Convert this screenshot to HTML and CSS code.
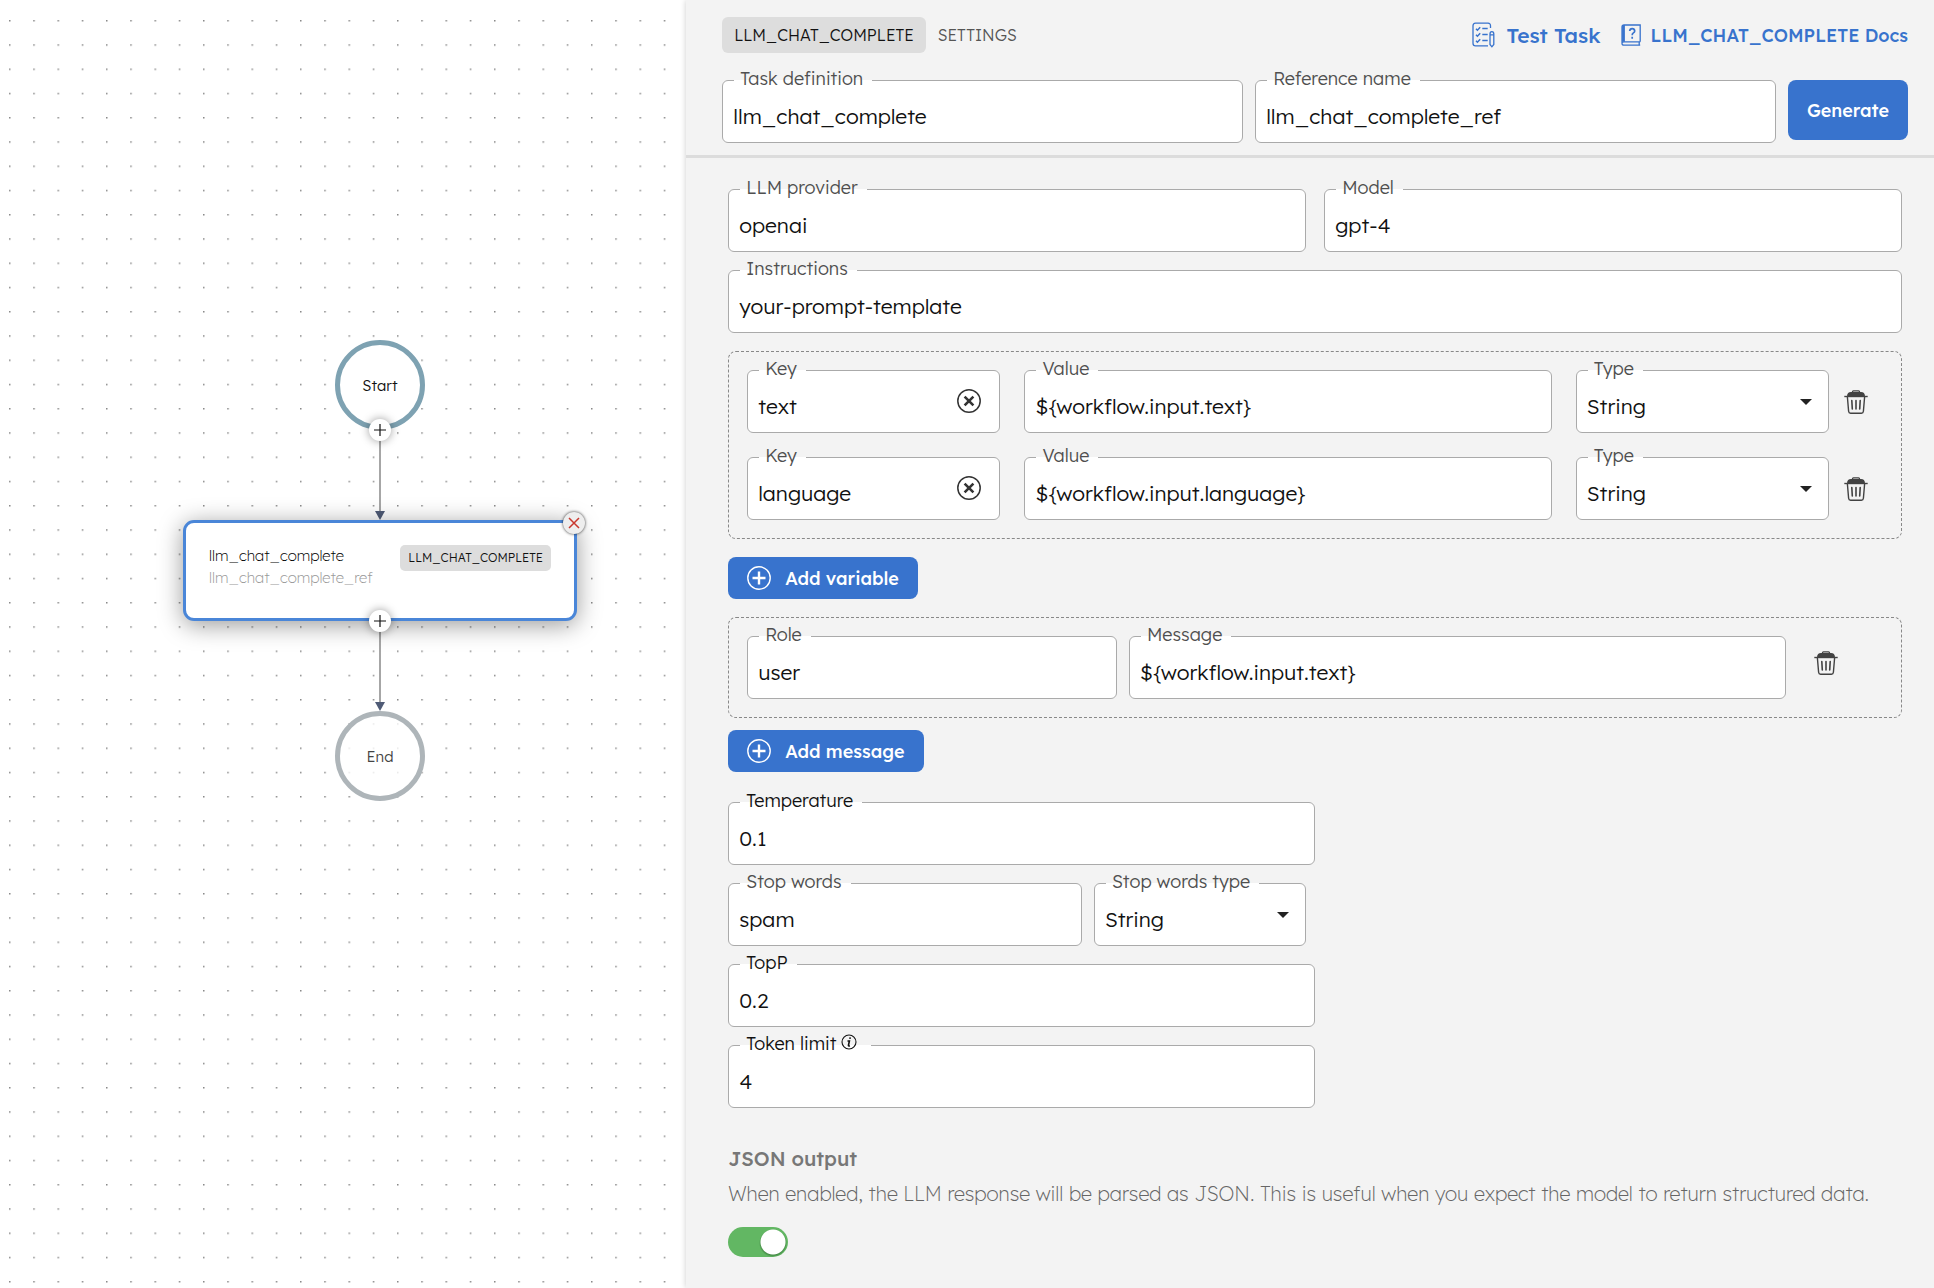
FILE: index.html
```html
<!DOCTYPE html>
<html lang="en">
  <head>
    <meta charset="UTF-8" />
    <meta name="viewport" content="width=device-width, initial-scale=1.0" />
    <title>LLM_CHAT_COMPLETE</title>
    <link rel="stylesheet" href="styles.css">
  </head>
  <body>
    <!-- shared icons -->
    <svg class="sprite" aria-hidden="true">
      <symbol id="icon-trash" viewBox="0 0 24 24">
        <path d="M8.500 2.600V1.700Q8.500.8 9.400.8h5.200q.9 0 .9.900v.9" fill="none" stroke="#424242" stroke-width="1.300" />
        <path d="M3 6.400C3 3.400 4.500 2 7 2h10c2.500 0 4 1.400 4 4.400z" fill="#424242" />
        <path d="M.3 6.500h23.400" stroke="#424242" stroke-width="1.400" />
        <path d="M3.400 7l1.200 14.300q.2 1.900 2 1.900h10.800q1.800 0 2-1.900L20.600 7" fill="none" stroke="#424242" stroke-width="1.400" />
        <path d="M7.800 10.500l.5 8.500M12 10.500V19M16.200 10.500l-.5 8.500" fill="none" stroke="#424242" stroke-width="1.600" stroke-linecap="round" />
      </symbol>
      <symbol id="icon-clear" viewBox="0 0 24 24">
        <circle cx="12" cy="12" r="11.200" fill="none" stroke="#333" stroke-width="1.500" />
        <path d="M7.600 7.600l8.800 8.800M16.400 7.600l-8.800 8.800" stroke="#333" stroke-width="2.600" />
      </symbol>
      <symbol id="icon-add" viewBox="0 0 24 24">
        <circle cx="12" cy="12" r="11.200" fill="none" stroke="#fff" stroke-width="1.400" />
        <path d="M12 5.500v13M5.500 12h13" stroke="#fff" stroke-width="2.400" />
      </symbol>
      <symbol id="icon-arrow" viewBox="0 0 12 6">
        <path d="M0 0h12L6 6z" fill="#222" />
      </symbol>
    </svg>

    <div class="app">
      <main class="canvas">
        <svg class="grid-dots" aria-hidden="true">
          <pattern id="dots" x="9" y="20" width="24.250" height="24.250" patternUnits="userSpaceOnUse">
            <rect width="1.500" height="1.500" fill="#888" />
          </pattern>
          <rect width="100%" height="100%" fill="url(#dots)" />
        </svg>

        <svg class="edge edge-start" viewBox="0 0 10 90" aria-hidden="true">
          <path d="M5 0v84" stroke="#a6a6a6" stroke-width="2" />
          <path d="M0 81h10L5 90z" fill="#4f5b76" />
        </svg>
        <svg class="edge edge-end" viewBox="0 0 10 90" aria-hidden="true">
          <path d="M5 0v84" stroke="#a6a6a6" stroke-width="2" />
          <path d="M0 81h10L5 90z" fill="#4f5b76" />
        </svg>

        <div class="terminal terminal-start">Start</div>

        <div class="task-card">
          <div class="task-names">
            <div class="task-name">llm_chat_complete</div>
            <div class="task-ref">llm_chat_complete_ref</div>
          </div>
          <div class="task-type">LLM_CHAT_COMPLETE</div>
        </div>

        <div class="terminal terminal-end">End</div>

        <button class="port port-start" type="button" aria-label="Add task after start">
          <svg viewBox="0 0 12 12"><path d="M6 0v12M0 6h12" stroke="#111" stroke-width="1.200" /></svg>
        </button>
        <button class="port port-task" type="button" aria-label="Add task after llm_chat_complete">
          <svg viewBox="0 0 12 12"><path d="M6 0v12M0 6h12" stroke="#111" stroke-width="1.200" /></svg>
        </button>
        <button class="remove-task" type="button" aria-label="Remove task">
          <svg viewBox="0 0 12 12"><path d="M1 1l10 10M11 1L1 11" stroke="#c9382e" stroke-width="1.500" /></svg>
        </button>
      </main>

      <section class="panel">
        <header class="panel-header">
          <div class="panel-bar">
            <nav class="tabs">
              <button class="tab active" type="button">LLM_CHAT_COMPLETE</button>
              <button class="tab" type="button">SETTINGS</button>
            </nav>
            <div class="links">
              <a class="link link-test" href="#">
                <svg class="link-icon" viewBox="0 0 24 26" fill="none" stroke="#3873cd" stroke-width="1.300">
                  <path d="M19.500 6V3.800Q19.500 1.200 17 1.200H4.500Q2 1.200 2 3.800v17.400q0 2.600 2.500 2.600H17" />
                  <path d="M5 6.800l1.400 1.400 2.800-3M5 12.800l1.400 1.400 2.800-3M5 18.800l1.400 1.400 2.800-3M11.300 6.600h5.400M11.300 12.600h5.400M11.300 18.600h5.400" stroke-width="1.500" />
                  <path d="M19 12q0-2.400 1.900-2.400t1.900 2.400v10.500l-1.900 2.300-1.900-2.300zM19 12.800h3.800" />
                </svg>
                Test Task
              </a>
              <a class="link link-docs" href="#">
                <svg class="docs-icon" viewBox="0 0 20 22" fill="none" stroke="#3873cd" stroke-width="1.300">
                  <path d="M19.200 17.800V1H3Q1 1 1 3v16M19.200 17.800H3q-2 0-2 1.700T3 21.200h16.200M18.200 17.800v3.400" />
                  <path d="M2.500 1v16.800" stroke-width="2.800" />
                  <path d="M8.700 7q.2-2.400 2.500-2.400t2.500 2.300q0 1.200-1.300 2t-1.200 2.300M11.200 12.800v1.900" stroke-width="1.700" />
                </svg>
                LLM_CHAT_COMPLETE Docs
              </a>
            </div>
          </div>
          <div class="task-row">
            <div class="field">
              <label for="taskDefinition">Task definition</label>
              <input id="taskDefinition" type="text" value="llm_chat_complete" />
            </div>
            <div class="field">
              <label for="referenceName">Reference name</label>
              <input id="referenceName" type="text" value="llm_chat_complete_ref" />
            </div>
            <button class="button button-generate" type="button">Generate</button>
          </div>
        </header>

        <form class="panel-body">
          <div class="two-columns">
            <div class="field">
              <label for="provider">LLM provider</label>
              <input id="provider" type="text" value="openai" />
            </div>
            <div class="field">
              <label for="model">Model</label>
              <input id="model" type="text" value="gpt-4" />
            </div>
          </div>

          <div class="field">
            <label for="instructions">Instructions</label>
            <input id="instructions" type="text" value="your-prompt-template" />
          </div>

          <div class="group variables">
            <div class="group-row">
              <div class="variable-fields">
                <div class="field">
                  <label for="key1">Key</label>
                  <input id="key1" type="text" value="text" />
                  <button class="clear" type="button" aria-label="Clear key"><svg><use href="#icon-clear" /></svg></button>
                </div>
                <div class="field">
                  <label for="value1">Value</label>
                  <input id="value1" type="text" value="${workflow.input.text}" />
                </div>
                <div class="field">
                  <label for="type1">Type</label>
                  <select id="type1"><option>String</option></select>
                  <svg class="arrow"><use href="#icon-arrow" /></svg>
                </div>
              </div>
              <button class="delete" type="button" aria-label="Delete variable"><svg><use href="#icon-trash" /></svg></button>
            </div>
            <div class="group-row">
              <div class="variable-fields">
                <div class="field">
                  <label for="key2">Key</label>
                  <input id="key2" type="text" value="language" />
                  <button class="clear" type="button" aria-label="Clear key"><svg><use href="#icon-clear" /></svg></button>
                </div>
                <div class="field">
                  <label for="value2">Value</label>
                  <input id="value2" type="text" value="${workflow.input.language}" />
                </div>
                <div class="field">
                  <label for="type2">Type</label>
                  <select id="type2"><option>String</option></select>
                  <svg class="arrow"><use href="#icon-arrow" /></svg>
                </div>
              </div>
              <button class="delete" type="button" aria-label="Delete variable"><svg><use href="#icon-trash" /></svg></button>
            </div>
          </div>

          <button class="button button-add" type="button"><svg><use href="#icon-add" /></svg>Add variable</button>

          <div class="group messages">
            <div class="group-row">
              <div class="message-fields">
                <div class="field">
                  <label for="role">Role</label>
                  <input id="role" type="text" value="user" />
                </div>
                <div class="field">
                  <label for="message">Message</label>
                  <input id="message" type="text" value="${workflow.input.text}" />
                </div>
              </div>
              <button class="delete" type="button" aria-label="Delete message"><svg><use href="#icon-trash" /></svg></button>
            </div>
          </div>

          <button class="button button-add" type="button"><svg><use href="#icon-add" /></svg>Add message</button>

          <div class="parameters">
            <div class="field dark">
              <label for="temperature">Temperature</label>
              <input id="temperature" type="text" value="0.1" />
            </div>
            <div class="stop-words">
              <div class="field">
                <label for="stopWords">Stop words</label>
                <input id="stopWords" type="text" value="spam" />
              </div>
              <div class="field">
                <label for="stopWordsType">Stop words type</label>
                <select id="stopWordsType"><option>String</option></select>
                <svg class="arrow"><use href="#icon-arrow" /></svg>
              </div>
            </div>
            <div class="field dark">
              <label for="topP">TopP</label>
              <input id="topP" type="text" value="0.2" />
            </div>
            <div class="field dark">
              <label for="tokenLimit">Token limit
                <svg class="info" viewBox="0 0 16 16" fill="none" stroke="#111">
                  <circle cx="8" cy="8" r="7" stroke-width="1.100" />
                  <path d="M9.200 3.300l-.3 1.500M6.500 7h1.900l-1 4.600q0 .8 1.500.2" stroke-width="1.600" />
                </svg>
              </label>
              <input id="tokenLimit" type="text" value="4" />
            </div>
          </div>

          <div class="json-output">
            <label class="json-title" for="jsonOutput">JSON output</label>
            <p class="json-text">When enabled, the LLM response will be parsed as JSON. This is useful when you expect the model to return structured data.</p>
            <input class="switch" id="jsonOutput" type="checkbox" role="switch" checked />
          </div>
        </form>
      </section>
    </div>
  </body>
</html>
```
FILE: styles.css
```css
* {
  box-sizing: border-box;
}

body {
  margin: 0;
  font-family: Lexend, Inter, sans-serif;
  font-weight: 300;
  color: #111;
  background: white;
}

button,
input,
select {
  font: inherit;
  color: inherit;
}

button {
  border: none;
  background: none;
  padding: 0;
  cursor: pointer;
}

svg {
  display: block;
}

.sprite {
  position: absolute;
  width: 0;
  height: 0;
}

.app {
  display: grid;
  grid-template-columns: 11fr 20fr;
  min-height: 100vh;
}

/* workflow canvas */

.canvas {
  position: relative;
  overflow: hidden;
}

.grid-dots {
  position: absolute;
  width: 100%;
  height: 100%;
}

.edge {
  position: absolute;
  left: 375px;
  width: 10px;
  height: 90px;
}

.edge-start {
  top: 430px;
}

.edge-end {
  top: 621px;
}

.terminal {
  position: absolute;
  left: 335px;
  display: flex;
  align-items: center;
  justify-content: center;
  width: 90px;
  height: 90px;
  border-radius: 50%;
  font-size: 15px;
}

.terminal-start {
  top: 340px;
  border: 5px solid #7ea2b2;
  background: white;
}

.terminal-end {
  top: 711px;
  border: 5px solid #aeb5b9;
  background: rgba(255, 255, 255, 0.8);
  color: #444;
}

.task-card {
  position: absolute;
  top: 520px;
  left: 183px;
  display: flex;
  justify-content: space-between;
  align-items: flex-start;
  width: 394px;
  height: 101px;
  padding: 22px 23px;
  border: 3px solid #4a86d8;
  border-radius: 11px;
  background: white;
  box-shadow: 0 4px 24px rgba(0, 0, 0, 0.4);
  font-size: 15px;
  line-height: 22px;
}

.task-names {
  color: #000;
  font-weight: 200;
}

.task-ref {
  color: #999;
}

.task-type {
  padding: 0 8px;
  border-radius: 5px;
  background: #ddd;
  font-size: 12px;
  line-height: 26px;
}

.port,
.remove-task {
  position: absolute;
  display: flex;
  align-items: center;
  justify-content: center;
  width: 22px;
  height: 22px;
  border-radius: 50%;
  background: white;
  box-shadow: 0 0 10px rgba(0, 0, 0, 0.4);
}

.port svg,
.remove-task svg {
  width: 12px;
  height: 12px;
}

.port-start {
  top: 419px;
  left: 369px;
}

.port-task {
  top: 610px;
  left: 369px;
}

.remove-task {
  top: 512px;
  left: 563px;
  background: #eee;
  box-shadow: 0 0 3px rgba(0, 0, 0, 0.8);
}

/* form panel */

.panel {
  position: relative;
  background: #f3f3f3;
  box-shadow: 0 0 6px rgba(0, 0, 0, 0.2);
}

.panel-header {
  padding: 17px 26px 12px 36px;
  border-bottom: 3px solid #dcdcdc;
}

.panel-bar,
.tabs,
.links,
.link,
.task-row {
  display: flex;
  align-items: center;
}

.panel-bar {
  justify-content: space-between;
  margin-bottom: 27px;
}

.tab {
  height: 36px;
  padding: 0 12px;
  border-radius: 6px;
  color: #555;
  font-size: 16px;
}

.tab.active {
  background: #ddd;
  color: #111;
}

.links {
  gap: 20px;
}

.link {
  color: #3873cd;
  font-size: 18px;
  font-weight: 500;
  text-decoration: none;
  gap: 10px;
}

.link-test {
  font-size: 21px;
  gap: 12px;
}

.link-icon {
  width: 24px;
  height: 26px;
}

.docs-icon {
  width: 20px;
  height: 22px;
}

.task-row {
  align-items: flex-start;
  gap: 12px;
}

.task-row .field {
  flex: 1;
}

.field {
  position: relative;
}

.field label {
  position: absolute;
  top: -13px;
  left: 12px;
  display: flex;
  padding: 0 9px 0 6px;
  background: linear-gradient(#f3f3f3 13px, white 13px);
  color: #4f4f4f;
  font-size: 18px;
  line-height: 24px;
  white-space: nowrap;
}

.field.dark label {
  color: #111;
}

.field input,
.field select {
  display: block;
  width: 100%;
  height: 63px;
  padding: 8px 10px 0;
  border: 1px solid #aaa;
  border-radius: 6px;
  background: white;
  font-size: 21px;
  appearance: none;
}

.arrow {
  position: absolute;
  top: 29px;
  right: 17px;
  width: 12px;
  height: 6px;
  pointer-events: none;
}

.clear {
  position: absolute;
  top: 19px;
  right: 19px;
}

.clear svg,
.delete svg,
.button-add svg {
  width: 24px;
  height: 24px;
}

.info {
  width: 16px;
  height: 16px;
  margin: 2px 5px 0;
}

.button {
  border-radius: 8px;
  background: #3873cd;
  color: white;
  font-size: 18px;
  font-weight: 500;
}

.button-generate {
  height: 60px;
  width: 120px;
}

.button-add {
  display: flex;
  align-items: center;
  align-self: flex-start;
  gap: 14px;
  height: 42px;
  padding: 0 19px;
}

.panel-body {
  display: flex;
  flex-direction: column;
  gap: 18px;
  padding: 31px 32px 29px 42px;
}

.two-columns {
  display: grid;
  grid-template-columns: 1fr 1fr;
  gap: 18px;
}

.group {
  display: flex;
  flex-direction: column;
  gap: 24px;
  padding: 18px;
  border: 1px dashed #888;
  border-radius: 8px;
}

.messages {
  margin-bottom: -6px;
}

.group-row {
  display: flex;
  align-items: center;
}

.variable-fields {
  flex: 1;
  display: grid;
  grid-template-columns: 12fr 25fr 12fr;
  gap: 24px;
}

.message-fields {
  flex: 1;
  display: grid;
  grid-template-columns: 9fr 16fr;
  gap: 12px;
}

.variables .delete {
  padding: 0 15px;
}

.messages .delete {
  padding: 0 45px 10px 28px;
}

.parameters {
  display: flex;
  flex-direction: column;
  gap: 18px;
  width: 50%;
  margin-top: 12px;
}

.stop-words {
  display: grid;
  grid-template-columns: 5fr 3fr;
  gap: 12px;
  padding-right: 9px;
}

.json-output {
  margin-top: 21px;
  color: #777;
  font-size: 20px;
}

.json-title {
  display: block;
  font-weight: 500;
  line-height: 24px;
}

.json-text {
  margin: 11px 0 21px;
  color: #666;
  font-weight: 200;
  line-height: 24px;
}

.switch {
  display: block;
  width: 60px;
  height: 30px;
  margin: 0;
  border-radius: 15px;
  background:
    radial-gradient(circle at 45px 15px, white 12px, transparent 13px),
    radial-gradient(circle at 45px 16px, #458a46 12px, #62b763 14px);
  appearance: none;
  cursor: pointer;
}
```
